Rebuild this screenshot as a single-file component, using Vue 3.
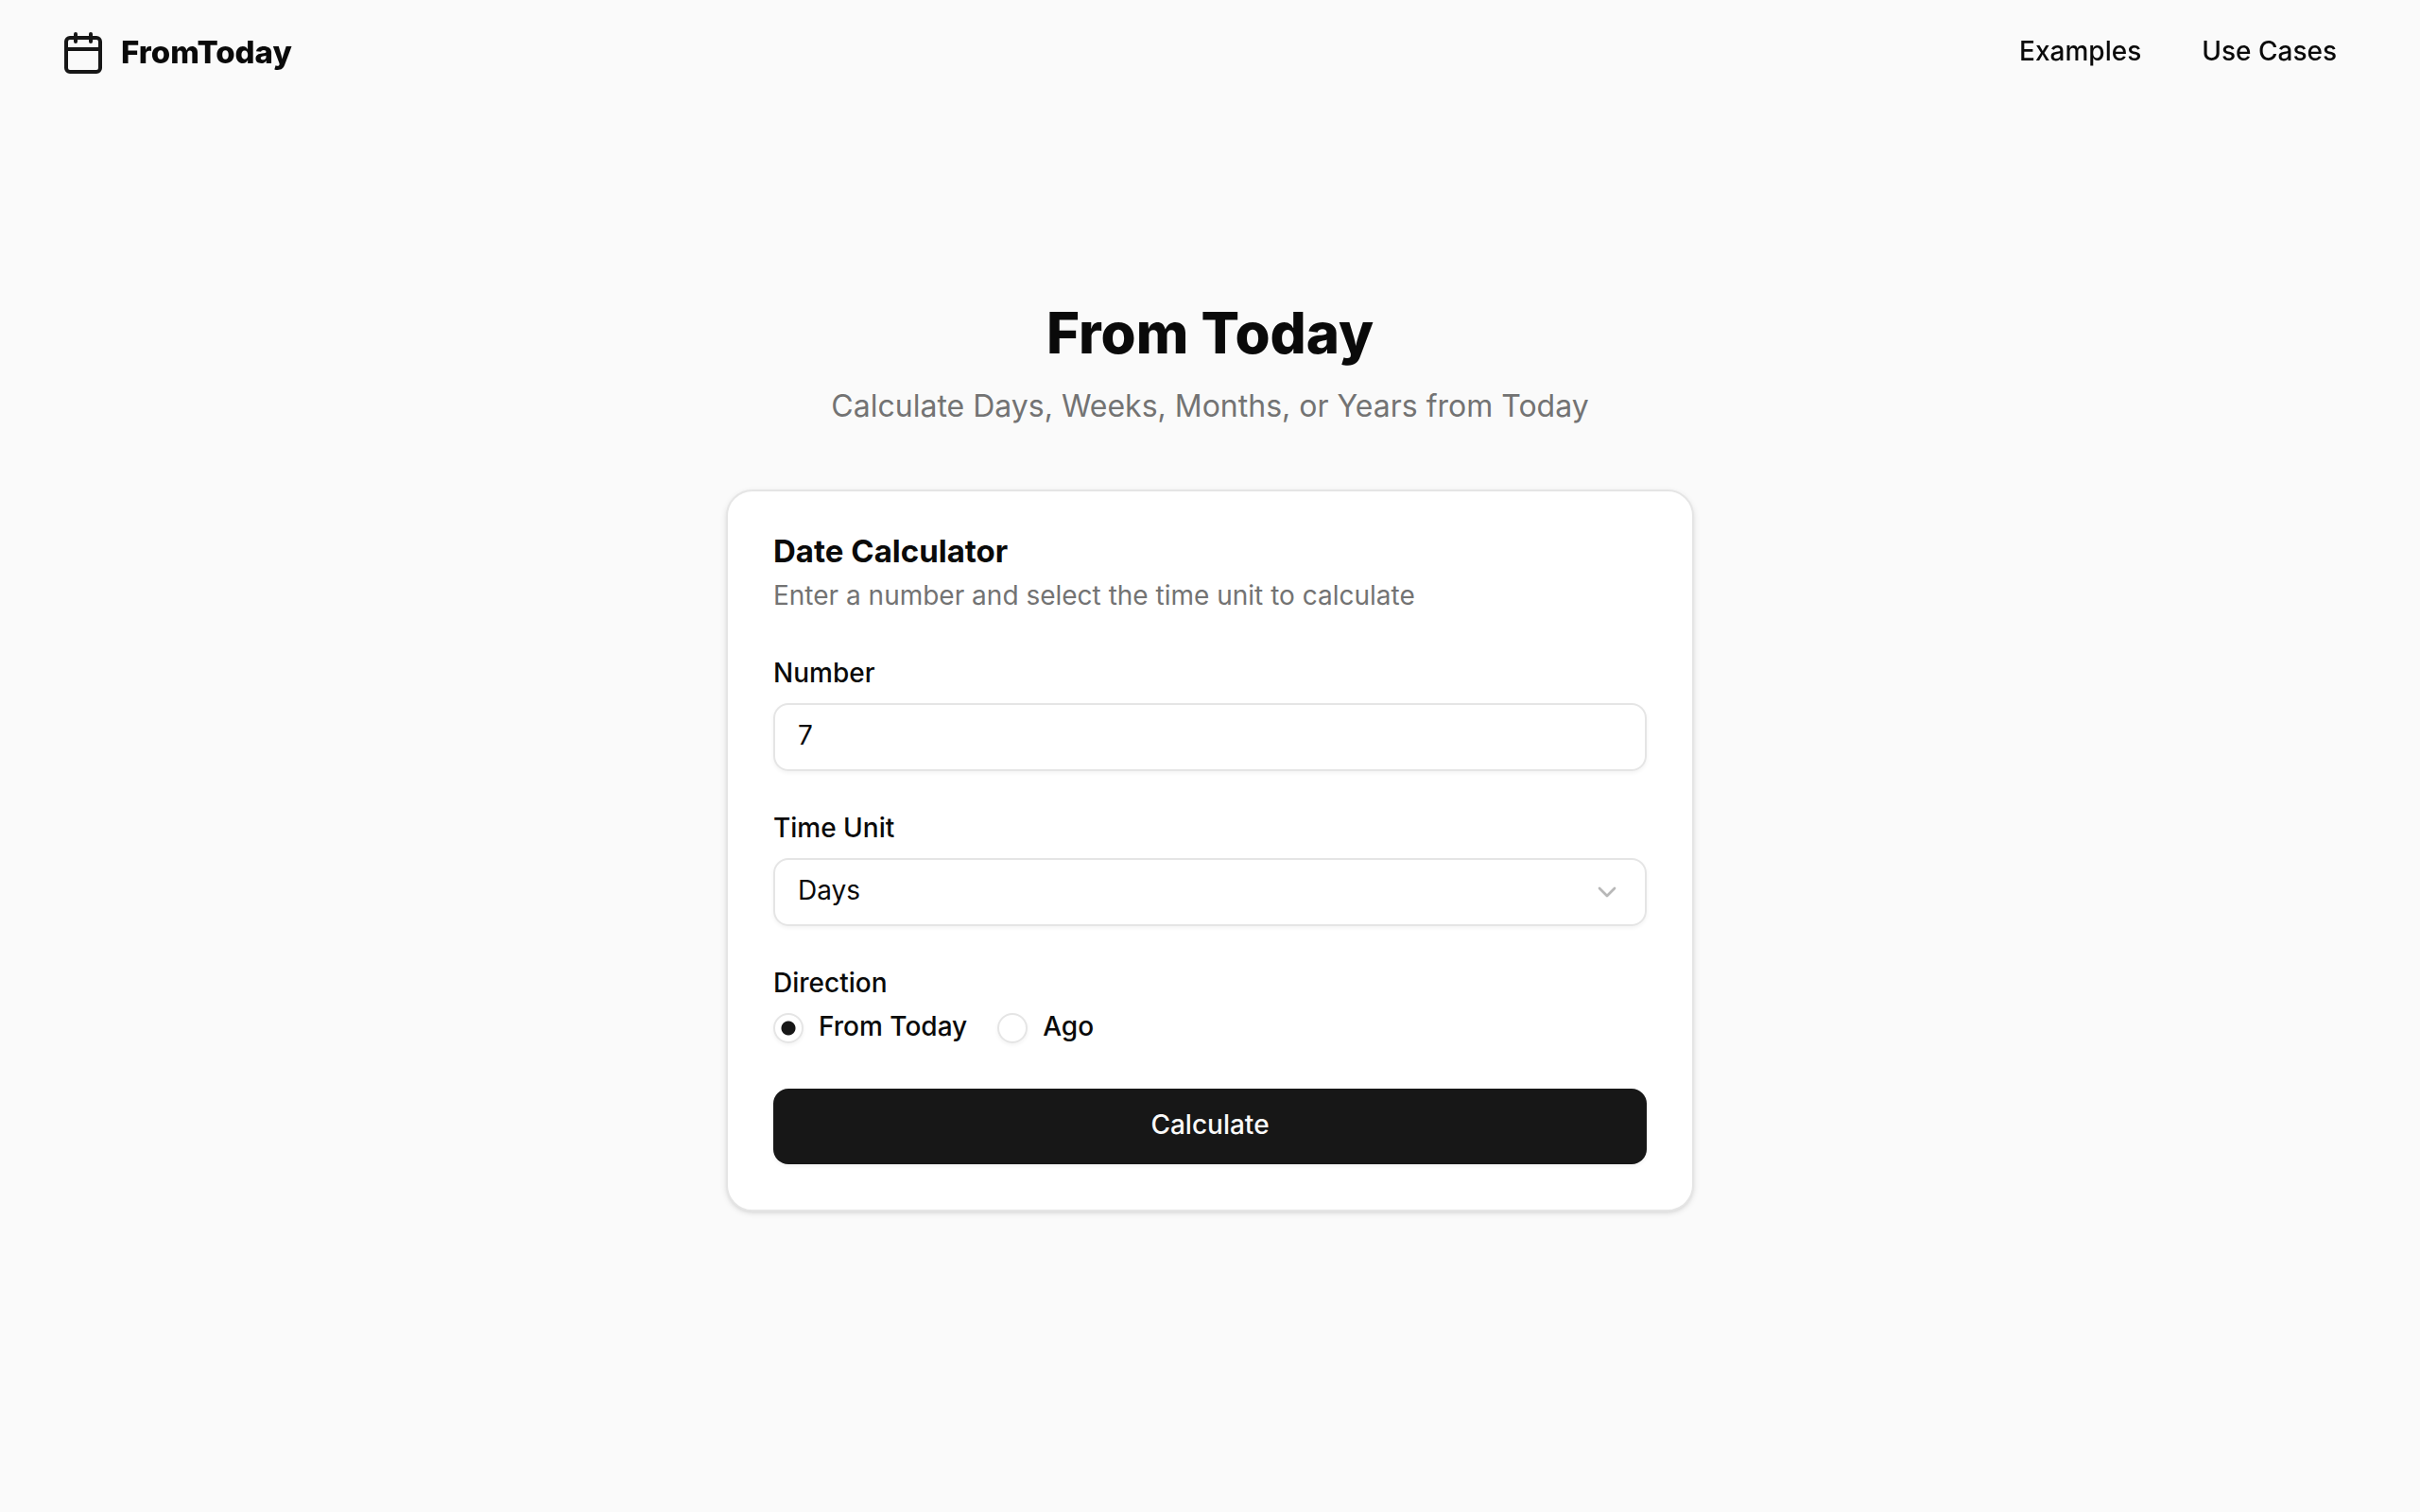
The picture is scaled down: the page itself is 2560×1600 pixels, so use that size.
<script setup>
import { ref } from 'vue'

const amount = ref(7)
const unit = ref('days')
const direction = ref('from')

const units = [
  { value: 'days', label: 'Days' },
  { value: 'weeks', label: 'Weeks' },
  { value: 'months', label: 'Months' },
  { value: 'years', label: 'Years' },
]
</script>

<template>
  <div class="page">
    <header class="topbar">
      <a class="brand" href="#">
        <svg class="brand-icon" viewBox="0 0 24 24" aria-hidden="true">
          <path d="M8 2v4M16 2v4M3 10h18" />
          <rect x="3" y="4" width="18" height="18" rx="2" />
        </svg>
        <span>FromToday</span>
      </a>
      <nav class="links">
        <a href="#examples">Examples</a>
        <a href="#use-cases">Use Cases</a>
      </nav>
    </header>

    <main class="main">
      <h1 class="title">From Today</h1>
      <p class="subtitle">Calculate Days, Weeks, Months, or Years from Today</p>

      <section class="card">
        <div class="card-head">
          <h2 class="card-title">Date Calculator</h2>
          <p class="card-text">Enter a number and select the time unit to calculate</p>
        </div>

        <form class="form" @submit.prevent>
          <div class="field">
            <label class="label" for="amount">Number</label>
            <input id="amount" v-model="amount" class="control" type="number" min="0" />
          </div>

          <div class="field">
            <label class="label" for="unit">Time Unit</label>
            <div class="select-wrap">
              <select id="unit" v-model="unit" class="control">
                <option v-for="u in units" :key="u.value" :value="u.value">{{ u.label }}</option>
              </select>
              <svg class="chevron" viewBox="0 0 24 24" aria-hidden="true">
                <path d="m6 9 6 6 6-6" />
              </svg>
            </div>
          </div>

          <div class="field" role="radiogroup" aria-labelledby="direction-label">
            <span id="direction-label" class="label">Direction</span>
            <div class="radios">
              <div class="radio-item">
                <input id="dir-from" v-model="direction" class="radio" type="radio" name="direction" value="from" />
                <label class="radio-label" for="dir-from">From Today</label>
              </div>
              <div class="radio-item">
                <input id="dir-ago" v-model="direction" class="radio" type="radio" name="direction" value="ago" />
                <label class="radio-label" for="dir-ago">Ago</label>
              </div>
            </div>
          </div>

          <button class="submit" type="submit">Calculate</button>
        </form>
      </section>
    </main>
  </div>
</template>

<style>
body {
  margin: 0;
  background: #fafafa;
}
</style>

<style scoped>
.page {
  box-sizing: border-box;
  min-height: 100vh;
  display: flex;
  align-items: center;
  justify-content: center;
  color: #0a0a0a;
  background: #fafafa;
  font-family: Inter, "Liberation Sans", sans-serif;
  font-size: 28px;
}

.topbar {
  position: fixed;
  top: 0;
  left: 0;
  right: 0;
  display: flex;
  align-items: flex-start;
  justify-content: space-between;
  padding: 32px 88px 32px 64px;
}

.brand {
  display: flex;
  align-items: flex-start;
  gap: 16px;
  color: inherit;
  text-decoration: none;
  font-size: 33px;
  line-height: 46px;
  font-weight: 800;
}

.brand-icon {
  width: 48px;
  height: 48px;
  fill: none;
  stroke: #171717;
  stroke-width: 2;
  stroke-linecap: round;
  stroke-linejoin: round;
}

.links {
  display: flex;
  gap: 64px;
}

.links a {
  color: inherit;
  text-decoration: none;
  line-height: 44px;
  font-weight: 500;
}

.main {
  width: 100%;
  max-width: 1024px;
}

.title {
  margin: 0 0 20px;
  text-align: center;
  font-size: 60px;
  line-height: 68px;
  font-weight: 800;
}

.subtitle {
  margin: 0 0 64px;
  text-align: center;
  color: #737373;
  font-size: 32px;
  line-height: 48px;
}

.card {
  box-sizing: border-box;
  padding: 48px;
  border: 2px solid #e5e5e5;
  border-radius: 28px;
  background: #fff;
  box-shadow: 0 2px 6px rgba(0, 0, 0, 0.1), 0 2px 4px -2px rgba(0, 0, 0, 0.1);
}

.card-head {
  display: flex;
  flex-direction: column;
  gap: 12px;
  margin-bottom: 50px;
}

.card-title {
  margin: 0;
  font-size: 33px;
  line-height: 30px;
  font-weight: 700;
}

.card-text {
  margin: 0;
  color: #737373;
  line-height: 40px;
}

.form {
  display: flex;
  flex-direction: column;
  gap: 48px;
}

.field {
  display: flex;
  flex-direction: column;
  gap: 20px;
}

.label {
  line-height: 24px;
  font-weight: 500;
}

.control {
  box-sizing: border-box;
  width: 100%;
  height: 72px;
  margin: 0;
  padding: 0 24px 4px;
  border: 2px solid #e5e5e5;
  border-radius: 16px;
  background: transparent;
  box-shadow: 0 2px 4px rgba(0, 0, 0, 0.05);
  color: inherit;
  font: inherit;
  appearance: none;
}

input.control {
  appearance: textfield;
}

.select-wrap {
  position: relative;
  display: flex;
}

.chevron {
  position: absolute;
  top: 20px;
  right: 26px;
  width: 32px;
  height: 32px;
  fill: none;
  stroke: #737373;
  stroke-width: 2;
  stroke-linecap: round;
  stroke-linejoin: round;
  opacity: 0.5;
  pointer-events: none;
}

.radios {
  display: flex;
  gap: 32px;
}

.radio-item {
  display: flex;
  align-items: flex-start;
  gap: 16px;
}

.radio-label {
  line-height: 28px;
  font-weight: 500;
}

.radio {
  box-sizing: border-box;
  width: 32px;
  height: 32px;
  margin: 0;
  border: 2px solid #e5e5e5;
  border-radius: 50%;
  box-shadow: 0 2px 4px rgba(0, 0, 0, 0.05);
  appearance: none;
}

.radio:checked {
  background: radial-gradient(circle, #171717 7px, transparent 8px);
}

.submit {
  height: 80px;
  padding: 0 48px 4px;
  border: 0;
  border-radius: 16px;
  background: #171717;
  box-shadow: 0 2px 4px rgba(0, 0, 0, 0.05);
  color: #fafafa;
  font: inherit;
  font-weight: 500;
}
</style>
